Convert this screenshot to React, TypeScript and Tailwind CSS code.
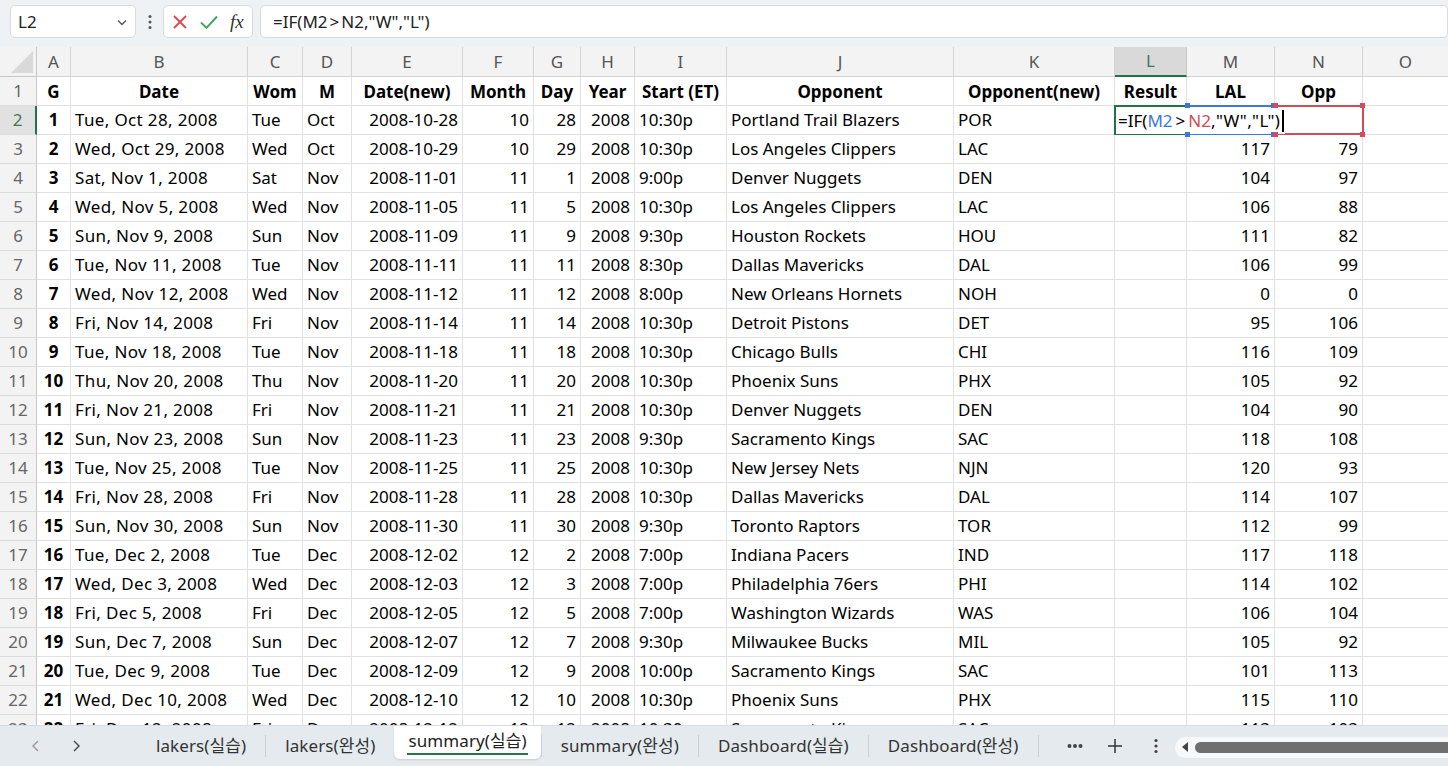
import React from "react";

const COLS = "grid grid-cols-[37px_34px_177px_55px_49px_111px_71px_47px_54px_92px_227px_161px_72px_88px_88px_86px]";

type Row = [string, string, string, string, string, string, string, string, string, string, string, string, string];

const data: Row[] = [
  ["1", "Tue, Oct 28, 2008", "Tue", "Oct", "2008-10-28", "10", "28", "2008", "10:30p", "Portland Trail Blazers", "POR", "", ""],
  ["2", "Wed, Oct 29, 2008", "Wed", "Oct", "2008-10-29", "10", "29", "2008", "10:30p", "Los Angeles Clippers", "LAC", "117", "79"],
  ["3", "Sat, Nov 1, 2008", "Sat", "Nov", "2008-11-01", "11", "1", "2008", "9:00p", "Denver Nuggets", "DEN", "104", "97"],
  ["4", "Wed, Nov 5, 2008", "Wed", "Nov", "2008-11-05", "11", "5", "2008", "10:30p", "Los Angeles Clippers", "LAC", "106", "88"],
  ["5", "Sun, Nov 9, 2008", "Sun", "Nov", "2008-11-09", "11", "9", "2008", "9:30p", "Houston Rockets", "HOU", "111", "82"],
  ["6", "Tue, Nov 11, 2008", "Tue", "Nov", "2008-11-11", "11", "11", "2008", "8:30p", "Dallas Mavericks", "DAL", "106", "99"],
  ["7", "Wed, Nov 12, 2008", "Wed", "Nov", "2008-11-12", "11", "12", "2008", "8:00p", "New Orleans Hornets", "NOH", "0", "0"],
  ["8", "Fri, Nov 14, 2008", "Fri", "Nov", "2008-11-14", "11", "14", "2008", "10:30p", "Detroit Pistons", "DET", "95", "106"],
  ["9", "Tue, Nov 18, 2008", "Tue", "Nov", "2008-11-18", "11", "18", "2008", "10:30p", "Chicago Bulls", "CHI", "116", "109"],
  ["10", "Thu, Nov 20, 2008", "Thu", "Nov", "2008-11-20", "11", "20", "2008", "10:30p", "Phoenix Suns", "PHX", "105", "92"],
  ["11", "Fri, Nov 21, 2008", "Fri", "Nov", "2008-11-21", "11", "21", "2008", "10:30p", "Denver Nuggets", "DEN", "104", "90"],
  ["12", "Sun, Nov 23, 2008", "Sun", "Nov", "2008-11-23", "11", "23", "2008", "9:30p", "Sacramento Kings", "SAC", "118", "108"],
  ["13", "Tue, Nov 25, 2008", "Tue", "Nov", "2008-11-25", "11", "25", "2008", "10:30p", "New Jersey Nets", "NJN", "120", "93"],
  ["14", "Fri, Nov 28, 2008", "Fri", "Nov", "2008-11-28", "11", "28", "2008", "10:30p", "Dallas Mavericks", "DAL", "114", "107"],
  ["15", "Sun, Nov 30, 2008", "Sun", "Nov", "2008-11-30", "11", "30", "2008", "9:30p", "Toronto Raptors", "TOR", "112", "99"],
  ["16", "Tue, Dec 2, 2008", "Tue", "Dec", "2008-12-02", "12", "2", "2008", "7:00p", "Indiana Pacers", "IND", "117", "118"],
  ["17", "Wed, Dec 3, 2008", "Wed", "Dec", "2008-12-03", "12", "3", "2008", "7:00p", "Philadelphia 76ers", "PHI", "114", "102"],
  ["18", "Fri, Dec 5, 2008", "Fri", "Dec", "2008-12-05", "12", "5", "2008", "7:00p", "Washington Wizards", "WAS", "106", "104"],
  ["19", "Sun, Dec 7, 2008", "Sun", "Dec", "2008-12-07", "12", "7", "2008", "9:30p", "Milwaukee Bucks", "MIL", "105", "92"],
  ["20", "Tue, Dec 9, 2008", "Tue", "Dec", "2008-12-09", "12", "9", "2008", "10:00p", "Sacramento Kings", "SAC", "101", "113"],
  ["21", "Wed, Dec 10, 2008", "Wed", "Dec", "2008-12-10", "12", "10", "2008", "10:30p", "Phoenix Suns", "PHX", "115", "110"],
  ["22", "Fri, Dec 12, 2008", "Fri", "Dec", "2008-12-12", "12", "12", "2008", "10:30p", "Sacramento Kings", "SAC", "113", "103"],
];

const letters = ["A", "B", "C", "D", "E", "F", "G", "H", "I", "J", "K", "L", "M", "N", "O"];
const headers = ["G", "Date", "Wom", "M", "Date(new)", "Month", "Day", "Year", "Start (ET)", "Opponent", "Opponent(new)", "Result", "LAL", "Opp", ""];

const align = ["center", "left", "left", "left", "right", "right", "right", "right", "left", "left", "left", "right", "right"];

const cellBase = "h-[29px] border-r border-b border-[#e1e1e1] flex items-center overflow-hidden whitespace-nowrap";

function DataCell({ value, a, bold, wide }: { value: string; a: string; bold?: boolean; wide?: boolean }) {
  const j = a === "center" ? "justify-center" : a === "right" ? "justify-end pr-[4px]" : "justify-start pl-[4px]";
  return <div className={`${cellBase} ${j} ${bold ? "font-bold" : ""} ${wide ? "tracking-[0.35px]" : ""}`}>{value}</div>;
}

function RowHeader({ n, active }: { n: number; active?: boolean }) {
  return (
    <div
      className={`h-[29px] border-b border-[#dcdcdc] flex items-center justify-center ${
        active ? "bg-[#e1e1e1] border-r-2 border-r-[#217346] text-[#3f7a55]" : "bg-[#f3f3f3] border-r border-r-[#c8c8c8] text-[#666]"
      }`}
    >
      {n}
    </div>
  );
}

function Corner({ pos, color }: { pos: string; color: string }) {
  return <span className={`absolute w-[5px] h-[5px] ${pos} ${color}`} />;
}

function TopBar() {
  return (
    <div className="h-[47px] shrink-0 flex items-center pl-[10px] bg-[#eef2f5] gap-0">
      <div className="w-[126px] h-[33px] bg-white border border-[#d6dbdf] rounded-[5px] flex items-center justify-between pl-[7px] pr-[6px] mt-[-4px]">
        <span className="text-[17px] text-[#222]">L2</span>
        <svg width="14" height="14" viewBox="0 0 14 14" fill="none" stroke="#555" strokeWidth="1.4">
          <path d="M3 5.5 L7 9.5 L11 5.5" />
        </svg>
      </div>
      <div className="w-[27px] flex justify-center mt-[-4px]">
        <svg width="4" height="16" viewBox="0 0 4 16" fill="#555">
          <circle cx="2" cy="2.5" r="1.5" />
          <circle cx="2" cy="8" r="1.5" />
          <circle cx="2" cy="13.5" r="1.5" />
        </svg>
      </div>
      <div className="w-[90px] h-[33px] bg-white border border-[#d6dbdf] rounded-[5px] flex items-center mt-[-4px] pl-[7px] gap-[10px]">
        <svg width="18" height="18" viewBox="0 0 18 18" stroke="#e0474c" strokeWidth="1.8" fill="none">
          <path d="M3 3 L15 15 M15 3 L3 15" />
        </svg>
        <svg width="20" height="18" viewBox="0 0 20 18" stroke="#3ea65a" strokeWidth="1.9" fill="none">
          <path d="M2 9.5 L7.5 15 L18 3.5" />
        </svg>
        <span className="font-['Liberation_Serif',serif] italic text-[19px] text-[#333] leading-none ml-[1px]">fx</span>
      </div>
      <div className="flex-1 h-[33px] bg-white border border-[#d6dbdf] rounded-[5px] flex items-center ml-[7px] mt-[-4px] pl-[12px] text-[17px] text-[#222] whitespace-nowrap">
        =IF(M2<span className="mx-[2px]">&gt;</span>N2,"W","L")
      </div>
    </div>
  );
}

function ColumnHeaders() {
  return (
    <div className={`${COLS} h-[30px] bg-[#f3f3f3]`}>
      <div className="h-[30px] border-r border-b border-[#c8c8c8] relative bg-[#f3f3f3]">
        <svg className="absolute right-[3px] bottom-[3px]" width="22" height="22" viewBox="0 0 22 22">
          <path d="M22 0 L22 22 L0 22 Z" fill="#d9d9d9" />
        </svg>
      </div>
      {letters.map((l) => (
        <div
          key={l}
          className={`h-[30px] flex items-center justify-center text-[17px] ${
            l === "L"
              ? "bg-[#d9d9d9] border-b-2 border-b-[#217346] border-r border-r-[#c8c8c8] text-[#3f7a55]"
              : "border-r border-b border-[#d4d4d4] text-[#555]"
          }`}
        >
          {l}
        </div>
      ))}
    </div>
  );
}

function Grid() {
  return (
    <div className="flex-1 overflow-hidden bg-white text-[17px] text-black relative">
      <ColumnHeaders />
      <div className={COLS}>
        <RowHeader n={1} />
        {headers.map((h, i) => (
          <div key={i} className={`${cellBase} justify-center font-bold pt-[2px]`}>
            {h}
          </div>
        ))}
      </div>
      {data.map((r, ri) => {
        const rowNum = ri + 2;
        const isEdit = rowNum === 2;
        return (
          <div key={ri} className={COLS}>
            <RowHeader n={rowNum} active={isEdit} />
            {r.slice(0, 11).map((v, ci) => (
              <DataCell key={ci} value={v} a={align[ci]} bold={ci === 0} wide={ci === 1} />
            ))}
            {isEdit ? (
              <>
                <div className="h-[29px] border-b border-r border-[#e1e1e1] relative">
                  <div className="absolute left-[-1px] top-[-1px] w-[73px] h-[30px] border-2 border-[#217346] z-10" />
                  <div className="absolute left-[1px] top-[1px] h-[27px] bg-white z-20 flex items-center pl-[2px] pr-[1px] whitespace-nowrap">
                    <span>=IF(</span>
                    <span className="text-[#3b79d8]">M2</span>
                    <span className="mx-[3px]">&gt;</span>
                    <span className="text-[#d14b5a]">N2</span>
                    <span className="tracking-[0.4px]">,"W","L")</span>
                    <span className="w-[1.5px] h-[22px] bg-black ml-[2px]" />
                  </div>
                </div>
                <div className="h-[29px] border-b border-r border-[#e1e1e1] relative">
                  <div className="absolute left-[0px] top-[-1px] w-[88px] h-[30px] border-y-2 border-[#3b79d8] z-10" />
                  <Corner pos="left-[-2px] top-[-3px]" color="bg-[#3b79d8] z-30" />
                  <Corner pos="right-[-2px] top-[-3px]" color="bg-[#3b79d8] z-30" />
                  <Corner pos="left-[-2px] bottom-[-3px]" color="bg-[#3b79d8] z-30" />
                  <Corner pos="right-[-2px] bottom-[-3px]" color="bg-[#3b79d8] z-30" />
                </div>
                <div className="h-[29px] border-b border-r border-[#e1e1e1] relative">
                  <div className="absolute left-[0px] top-[-1px] w-[89px] h-[30px] border-2 border-[#d14b5a] z-10" />
                  <Corner pos="left-[-2px] top-[-3px]" color="bg-[#d14b5a] z-30" />
                  <Corner pos="right-[-3px] top-[-3px]" color="bg-[#d14b5a] z-30" />
                  <Corner pos="left-[-2px] bottom-[-3px]" color="bg-[#d14b5a] z-30" />
                  <Corner pos="right-[-3px] bottom-[-3px]" color="bg-[#d14b5a] z-30" />
                </div>
              </>
            ) : (
              <>
                <DataCell value="" a="left" />
                <DataCell value={r[11]} a="right" />
                <DataCell value={r[12]} a="right" />
              </>
            )}
            <DataCell value="" a="left" />
          </div>
        );
      })}
    </div>
  );
}

function Tab({ label, active }: { label: string; active?: boolean }) {
  if (active) {
    return (
      <div className="h-[33px] self-start bg-white rounded-b-[6px] px-[13px] flex flex-col items-center justify-center shadow-[0_1px_2px_rgba(0,0,0,0.12)]">
        <span className="text-[17px] text-[#222] leading-[22px] border-b-2 border-[#1e7b45] pb-[1px] px-[1px] tracking-[0.1px]">{label}</span>
      </div>
    );
  }
  return <div className="px-[19px] text-[17px] text-[#333] whitespace-nowrap tracking-[0.1px]">{label}</div>;
}

function Sep() {
  return <div className="w-px h-[22px] bg-[#c9cfd3]" />;
}

function TabBar() {
  return (
    <div className="h-[41px] shrink-0 bg-[#e4eaed] flex items-center text-[#333] border-t border-[#d6dde1]">
      <div className="w-[137px] flex items-center pl-[30px] gap-[28px]">
        <svg width="12" height="14" viewBox="0 0 12 14" fill="none" stroke="#999" strokeWidth="1.4">
          <path d="M8 2 L3 7 L8 12" />
        </svg>
        <svg width="12" height="14" viewBox="0 0 12 14" fill="none" stroke="#444" strokeWidth="1.4">
          <path d="M4 2 L9 7 L4 12" />
        </svg>
      </div>
      <Tab label="lakers(실습)" />
      <Sep />
      <Tab label="lakers(완성)" />
      <Tab label="summary(실습)" active />
      <Sep />
      <Tab label="summary(완성)" />
      <Sep />
      <Tab label="Dashboard(실습)" />
      <Sep />
      <Tab label="Dashboard(완성)" />
      <Sep />
      <div className="w-[28px]" />
      <svg width="16" height="6" viewBox="0 0 16 6" fill="#444">
        <circle cx="2.5" cy="3" r="2" />
        <circle cx="8" cy="3" r="2" />
        <circle cx="13.5" cy="3" r="2" />
      </svg>
      <div className="w-[24px]" />
      <svg width="16" height="16" viewBox="0 0 16 16" stroke="#333" strokeWidth="1.5">
        <path d="M8 1 V15 M1 8 H15" />
      </svg>
      <div className="w-[31px]" />
      <svg width="4" height="16" viewBox="0 0 4 16" fill="#444">
        <circle cx="2" cy="2.5" r="1.6" />
        <circle cx="2" cy="8" r="1.6" />
        <circle cx="2" cy="13.5" r="1.6" />
      </svg>
      <div className="w-[17px]" />
      <div className="flex-1 h-[21px] bg-[#f6f8f9] rounded-l-full flex items-center pl-[6px] gap-[6px] mt-[2px]">
        <svg width="8" height="10" viewBox="0 0 8 10" fill="#444">
          <path d="M7 0 L1 5 L7 10 Z" />
        </svg>
        <div className="flex-1 h-[11px] bg-[#6f6f6f] rounded-l-full" />
      </div>
    </div>
  );
}

export default function App() {
  return (
    <div className="w-[1448px] h-[766px] flex flex-col overflow-hidden bg-[#eef2f5] font-['Noto_Sans','Noto_Sans_CJK_KR',sans-serif]">
      <TopBar />
      <Grid />
      <TabBar />
    </div>
  );
}
